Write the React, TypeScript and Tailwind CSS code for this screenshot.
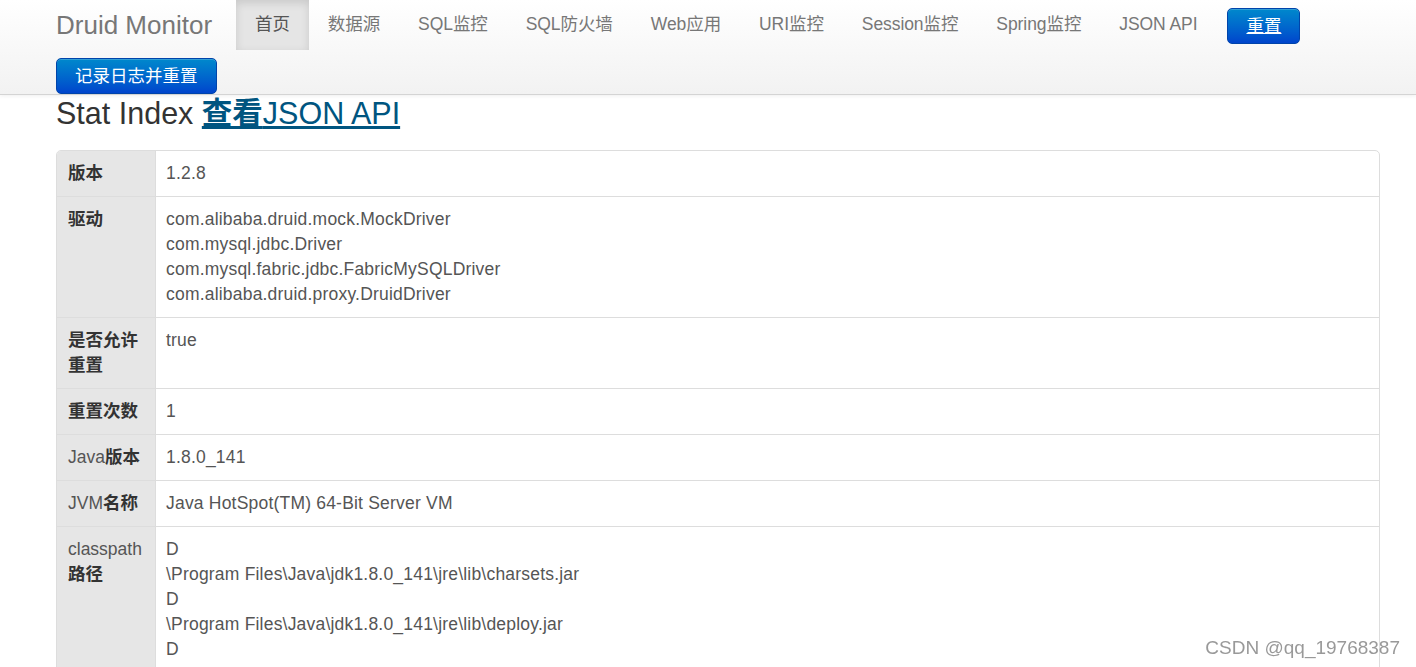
import React from "react";

const font = {
  fontFamily: '"Liberation Sans", "Noto Sans CJK SC", sans-serif',
};

const navItems = [
  "首页",
  "数据源",
  "SQL监控",
  "SQL防火墙",
  "Web应用",
  "URI监控",
  "Session监控",
  "Spring监控",
  "JSON API",
];

const classpath = [
  "D",
  "\\Program Files\\Java\\jdk1.8.0_141\\jre\\lib\\charsets.jar",
  "D",
  "\\Program Files\\Java\\jdk1.8.0_141\\jre\\lib\\deploy.jar",
  "D",
];

type Row = { label: React.ReactNode; values: string[] };

const rows: Row[] = [
  { label: <b>版本</b>, values: ["1.2.8"] },
  {
    label: <b>驱动</b>,
    values: [
      "com.alibaba.druid.mock.MockDriver",
      "com.mysql.jdbc.Driver",
      "com.mysql.fabric.jdbc.FabricMySQLDriver",
      "com.alibaba.druid.proxy.DruidDriver",
    ],
  },
  { label: <b>是否允许重置</b>, values: ["true"] },
  { label: <b>重置次数</b>, values: ["1"] },
  {
    label: (
      <>
        <span className="text-[#555]">Java</span>
        <b>版本</b>
      </>
    ),
    values: ["1.8.0_141"],
  },
  {
    label: (
      <>
        <span className="text-[#555]">JVM</span>
        <b>名称</b>
      </>
    ),
    values: ["Java HotSpot(TM) 64-Bit Server VM"],
  },
  {
    label: (
      <>
        <span className="text-[#555]">classpath </span>
        <b>路径</b>
      </>
    ),
    values: classpath,
  },
];

function BlueButton({ children, underline }: { children: React.ReactNode; underline?: boolean }) {
  return (
    <button
      className={
        "h-[36px] rounded-[5px] border border-[#0044aa] bg-gradient-to-b from-[#0088cc] to-[#0044cc] px-[18px] text-[17.5px] leading-[25px] text-white shadow-[inset_0_1px_0_rgba(255,255,255,0.2)]" +
        (underline ? " underline" : "")
      }
    >
      {children}
    </button>
  );
}

export default function App() {
  return (
    <div className="relative min-h-[667px] bg-white text-[#333]" style={font}>
      <div className="border-b border-[#d4d4d4] bg-gradient-to-b from-white to-[#f2f2f2] shadow-[0_1px_4px_rgba(0,0,0,0.065)]">
        <div className="flex h-[94px] w-[1324px] flex-wrap content-start items-start pl-[56px]">
          <div className="w-[180px] pt-[10px] text-[26px] leading-[30px] text-[#777]">Druid Monitor</div>
          {navItems.map((item, i) => (
            <div
              key={item}
              className={
                "h-[50px] px-[19px] py-[12px] text-[17.5px] leading-[25px] tracking-[-0.08px] " +
                (i === 0
                  ? "bg-[#e5e5e5] text-[#555] shadow-[inset_0_3px_8px_rgba(0,0,0,0.125)]"
                  : "text-[#777]")
              }
            >
              {item}
            </div>
          ))}
          <div className="ml-[11px] mt-[8px]">
            <BlueButton underline>重置</BlueButton>
          </div>
          <div className="mt-[8px]">
            <BlueButton>记录日志并重置</BlueButton>
          </div>
        </div>
      </div>

      <div className="pl-[56px] pr-[36px]">
        <h3 className="mb-[19px] text-[30.5px] leading-[36px] text-[#333]">
          Stat Index{" "}
          <a className="text-[#005580] underline">
            <b>查看</b>JSON API
          </a>
        </h3>

        <div className="overflow-hidden rounded-[5px] border border-[#ddd]">
          {rows.map((row, i) => (
            <div key={i} className={"flex " + (i > 0 ? "border-t border-[#ddd]" : "")}>
              <div className="w-[99px] shrink-0 border-r border-[#ddd] bg-[#e6e6e6] px-[11px] py-[10px] text-[17.5px] leading-[25px] text-[#333]">
                {row.label}
              </div>
              <div className="flex-1 px-[10px] pb-[10px] pt-[10px] text-[17.5px] leading-[25px] tracking-[0.2px] text-[#555]">
                {row.values.map((v, j) => (
                  <div key={j}>{v}</div>
                ))}
              </div>
            </div>
          ))}
        </div>
      </div>

      <div className="fixed bottom-[8px] right-[16px] text-[19px] leading-[22px] text-[#999]">
        CSDN @qq_19768387
      </div>
    </div>
  );
}
